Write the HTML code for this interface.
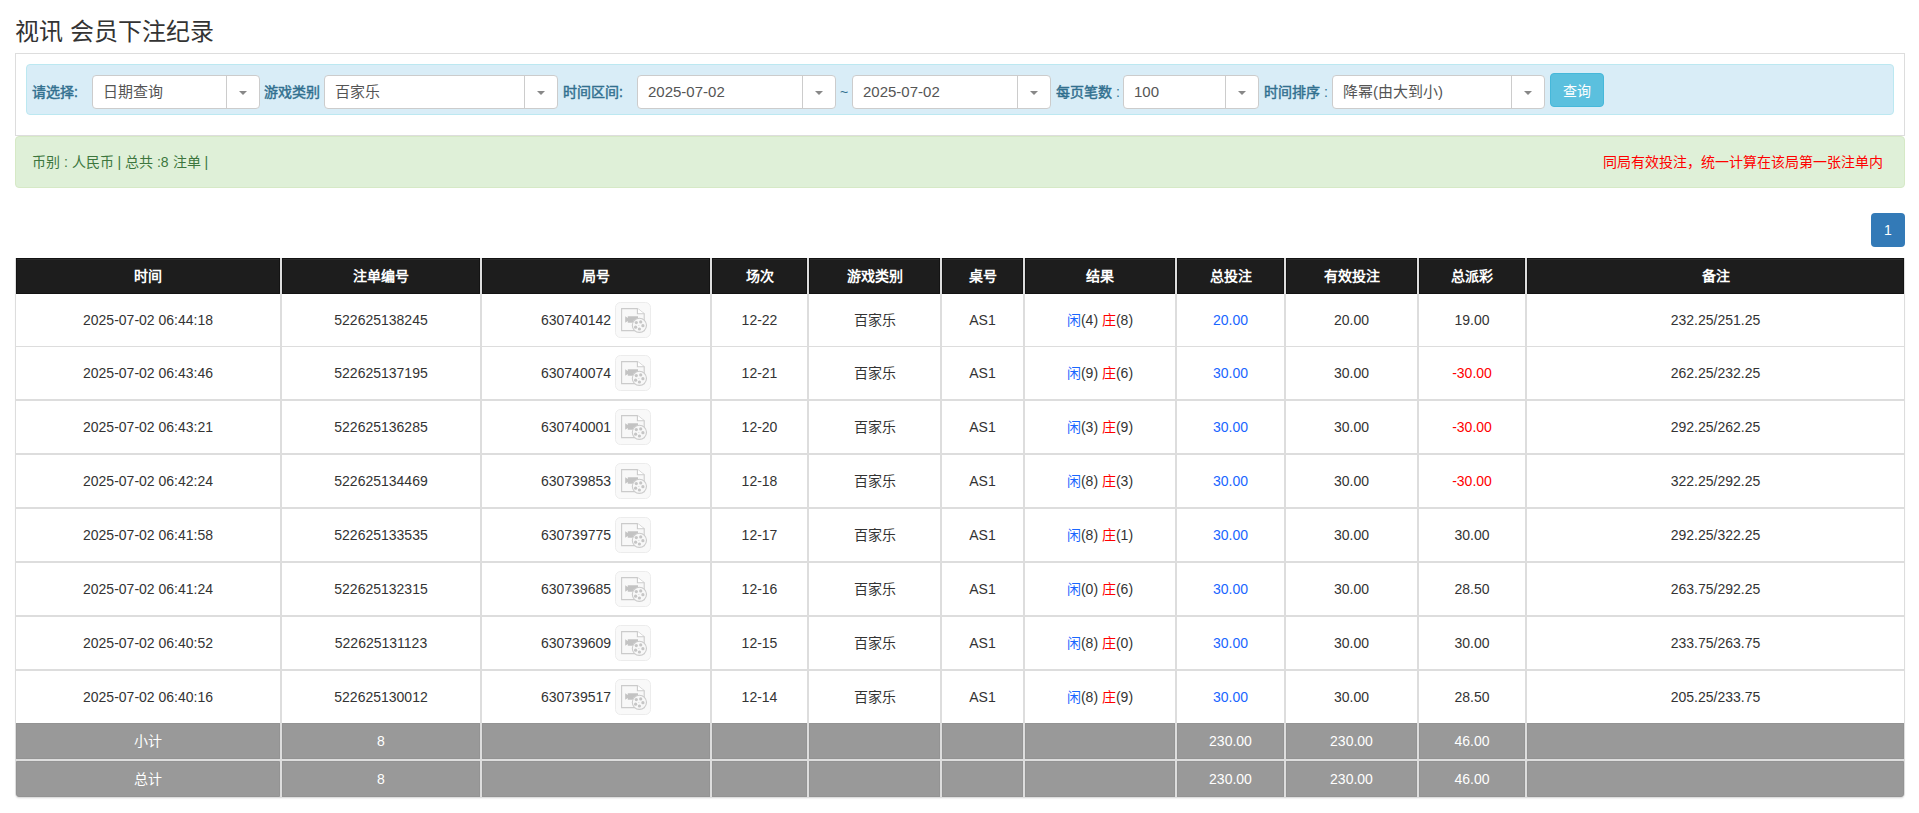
<!DOCTYPE html><html lang="zh-CN"><head><meta charset="utf-8"><style>
*{box-sizing:border-box;margin:0;padding:0}
html,body{width:1919px;height:813px;overflow:hidden;background:#fff}
body{font-family:"Liberation Sans",sans-serif;font-size:14px;color:#333;position:relative}
.a{position:absolute}
.t{position:absolute;white-space:nowrap;line-height:20px}
.title{font-size:24px;color:#333;line-height:30px}
.lbl{font-weight:500;color:#31708f;-webkit-text-stroke:0.45px #31708f}
.sel{position:absolute;top:75px;height:34px;background:#fff;border:1px solid #ccc;border-radius:4px}
.sel .dv{position:absolute;top:0;bottom:0;width:1px;background:#ccc}
.sel .ar{position:absolute;top:15px;width:0;height:0;border-left:4px solid transparent;border-right:4px solid transparent;border-top:4px solid #888}
.sel .tx{position:absolute;left:10px;top:6px;line-height:20px;font-size:15px;color:#555;white-space:nowrap}
.cell{position:absolute;background:#fff;display:flex;align-items:center;justify-content:center;white-space:nowrap;line-height:20px}
.hd{padding-top:0px;background:#1d1d1d;border:1px solid #131313;color:#fff;font-weight:bold;box-shadow:inset 0 1px 0 #2b2b2b}
.ft{background:#999;border:1px solid #939393;color:#fff}
.blr{border-bottom-left-radius:3px}.brr{border-bottom-right-radius:3px}.bl{color:#1a66ff}.rd{color:#f00}
</style></head><body>

<div class="t title" style="left:15px;top:17px">视讯 会员下注纪录</div>
<div class="a" style="left:15px;top:53px;width:1890px;height:83px;border:1px solid #ddd"></div>
<div class="a" style="left:26px;top:64px;width:1868px;height:51px;background:#d9edf7;border:1px solid #bce8f1;border-radius:4px"></div>
<div class="t lbl" style="left:32px;top:82px">请选择:</div>
<div class="sel" style="left:92px;width:168px"><div class="tx">日期查询</div><div class="dv" style="left:133px"></div><div class="ar" style="left:146px"></div></div>
<div class="t lbl" style="left:264px;top:82px">游戏类别</div>
<div class="sel" style="left:324px;width:234px"><div class="tx">百家乐</div><div class="dv" style="left:199px"></div><div class="ar" style="left:212px"></div></div>
<div class="t lbl" style="left:563px;top:82px">时间区间:</div>
<div class="sel" style="left:637px;width:199px"><div class="tx">2025-07-02</div><div class="dv" style="left:164px"></div><div class="ar" style="left:177px"></div></div>
<div class="t" style="left:840px;top:82px;color:#31708f">~</div>
<div class="sel" style="left:852px;width:199px"><div class="tx">2025-07-02</div><div class="dv" style="left:164px"></div><div class="ar" style="left:177px"></div></div>
<div class="t lbl" style="left:1056px;top:82px">每页笔数 <span style="font-weight:normal;-webkit-text-stroke:0">:</span></div>
<div class="sel" style="left:1123px;width:136px"><div class="tx">100</div><div class="dv" style="left:101px"></div><div class="ar" style="left:114px"></div></div>
<div class="t lbl" style="left:1264px;top:82px">时间排序 <span style="font-weight:normal;-webkit-text-stroke:0">:</span></div>
<div class="sel" style="left:1332px;width:213px"><div class="tx">降幂(由大到小)</div><div class="dv" style="left:178px"></div><div class="ar" style="left:191px"></div></div>
<div class="a" style="left:1550px;top:73px;width:54px;height:34px;background:#5bc0de;border:1px solid #46b8da;border-radius:4px;color:#fff;display:flex;align-items:center;justify-content:center;padding-top:2px;line-height:20px">查询</div>
<div class="a" style="left:15px;top:136px;width:1890px;height:52px;background:#dff0d8;border:1px solid #d6e9c6;border-radius:4px"></div>
<div class="t" style="left:32px;top:152px;color:#3c763d">币别 : 人民币 | 总共 :8 注单 |</div>
<div class="t" style="right:36px;top:152px;color:#f00">同局有效投注，统一计算在该局第一张注单内</div>
<div class="a" style="left:1871px;top:213px;width:34px;height:34px;background:#337ab7;border-radius:4px;color:#fff;display:flex;align-items:center;justify-content:center;line-height:20px">1</div>
<div class="a" style="left:15px;top:258px;width:1890px;height:539px;background:#ddd;border-radius:0 0 4px 4px;box-shadow:0 2px 2px -1px rgba(0,0,0,.18)"></div>
<div class="cell hd" style="left:16px;top:258px;width:264px;height:36px"><span>时间</span></div>
<div class="cell hd" style="left:282px;top:258px;width:198px;height:36px"><span>注单编号</span></div>
<div class="cell hd" style="left:482px;top:258px;width:228px;height:36px"><span>局号</span></div>
<div class="cell hd" style="left:712px;top:258px;width:95px;height:36px"><span>场次</span></div>
<div class="cell hd" style="left:809px;top:258px;width:131px;height:36px"><span>游戏类别</span></div>
<div class="cell hd" style="left:942px;top:258px;width:81px;height:36px"><span>桌号</span></div>
<div class="cell hd" style="left:1025px;top:258px;width:150px;height:36px"><span>结果</span></div>
<div class="cell hd" style="left:1177px;top:258px;width:107px;height:36px"><span>总投注</span></div>
<div class="cell hd" style="left:1286px;top:258px;width:131px;height:36px"><span>有效投注</span></div>
<div class="cell hd" style="left:1419px;top:258px;width:106px;height:36px"><span>总派彩</span></div>
<div class="cell hd" style="left:1527px;top:258px;width:377px;height:36px"><span>备注</span></div>
<div class="cell"  style="left:16px;top:294px;width:264px;height:52px"><span>2025-07-02 06:44:18</span></div>

<div class="cell"  style="left:282px;top:294px;width:198px;height:52px"><span>522625138245</span></div>

<div class="cell"  style="left:482px;top:294px;width:228px;height:52px"><span><span style="display:inline-flex;align-items:center">630740142<span style="display:block;width:36px;height:36px;margin-left:4px"><svg width="36" height="36" viewBox="0 0 36 36"><rect x="0.5" y="0.5" width="35" height="35" rx="5" fill="#f9f9f9" stroke="#ececec"/>
<path d="M6.6 6.6 H22.4 L29.2 11.8 V28.6 H6.6 Z" fill="#f8f8f8" stroke="#cbcbcb" stroke-width="1.1"/>
<path d="M22.4 6.6 V11.8 H29.2" fill="#fff" stroke="#cbcbcb" stroke-width="1.1"/>
<path d="M10.2 14.2 L12.8 15.9 V14.2 H23 V20.8 H12.8 V19 L10.2 20.8 Z" fill="#c3c3c3"/>
<circle cx="24.4" cy="23.3" r="7.1" fill="#f8f8f8" stroke="#cbcbcb" stroke-width="1.1"/>
<circle cx="21.3" cy="20.6" r="1.6" fill="#c6c6c6"/><circle cx="25.7" cy="19.9" r="1.6" fill="#c6c6c6"/>
<circle cx="27.9" cy="23.7" r="1.6" fill="#c6c6c6"/><circle cx="24.4" cy="27.0" r="1.6" fill="#c6c6c6"/>
<circle cx="20.6" cy="25.2" r="1.6" fill="#c6c6c6"/><circle cx="23.9" cy="23.5" r="0.5" fill="#d0d0d0"/></svg></span></span></span></div>

<div class="cell"  style="left:712px;top:294px;width:95px;height:52px"><span>12-22</span></div>

<div class="cell"  style="left:809px;top:294px;width:131px;height:52px"><span>百家乐</span></div>

<div class="cell"  style="left:942px;top:294px;width:81px;height:52px"><span>AS1</span></div>

<div class="cell"  style="left:1025px;top:294px;width:150px;height:52px"><span><span class="bl">闲</span>(4) <span class="rd">庄</span>(8)</span></div>

<div class="cell"  style="left:1177px;top:294px;width:107px;height:52px"><span><span class="bl">20.00</span></span></div>

<div class="cell"  style="left:1286px;top:294px;width:131px;height:52px"><span>20.00</span></div>

<div class="cell"  style="left:1419px;top:294px;width:106px;height:52px"><span>19.00</span></div>

<div class="cell"  style="left:1527px;top:294px;width:377px;height:52px"><span>232.25/251.25</span></div>

<div class="cell"  style="left:16px;top:347px;width:264px;height:52px"><span>2025-07-02 06:43:46</span></div>

<div class="cell"  style="left:282px;top:347px;width:198px;height:52px"><span>522625137195</span></div>

<div class="cell"  style="left:482px;top:347px;width:228px;height:52px"><span><span style="display:inline-flex;align-items:center">630740074<span style="display:block;width:36px;height:36px;margin-left:4px"><svg width="36" height="36" viewBox="0 0 36 36"><rect x="0.5" y="0.5" width="35" height="35" rx="5" fill="#f9f9f9" stroke="#ececec"/>
<path d="M6.6 6.6 H22.4 L29.2 11.8 V28.6 H6.6 Z" fill="#f8f8f8" stroke="#cbcbcb" stroke-width="1.1"/>
<path d="M22.4 6.6 V11.8 H29.2" fill="#fff" stroke="#cbcbcb" stroke-width="1.1"/>
<path d="M10.2 14.2 L12.8 15.9 V14.2 H23 V20.8 H12.8 V19 L10.2 20.8 Z" fill="#c3c3c3"/>
<circle cx="24.4" cy="23.3" r="7.1" fill="#f8f8f8" stroke="#cbcbcb" stroke-width="1.1"/>
<circle cx="21.3" cy="20.6" r="1.6" fill="#c6c6c6"/><circle cx="25.7" cy="19.9" r="1.6" fill="#c6c6c6"/>
<circle cx="27.9" cy="23.7" r="1.6" fill="#c6c6c6"/><circle cx="24.4" cy="27.0" r="1.6" fill="#c6c6c6"/>
<circle cx="20.6" cy="25.2" r="1.6" fill="#c6c6c6"/><circle cx="23.9" cy="23.5" r="0.5" fill="#d0d0d0"/></svg></span></span></span></div>

<div class="cell"  style="left:712px;top:347px;width:95px;height:52px"><span>12-21</span></div>

<div class="cell"  style="left:809px;top:347px;width:131px;height:52px"><span>百家乐</span></div>

<div class="cell"  style="left:942px;top:347px;width:81px;height:52px"><span>AS1</span></div>

<div class="cell"  style="left:1025px;top:347px;width:150px;height:52px"><span><span class="bl">闲</span>(9) <span class="rd">庄</span>(6)</span></div>

<div class="cell"  style="left:1177px;top:347px;width:107px;height:52px"><span><span class="bl">30.00</span></span></div>

<div class="cell"  style="left:1286px;top:347px;width:131px;height:52px"><span>30.00</span></div>

<div class="cell"  style="left:1419px;top:347px;width:106px;height:52px"><span><span class="rd">-30.00</span></span></div>

<div class="cell"  style="left:1527px;top:347px;width:377px;height:52px"><span>262.25/232.25</span></div>

<div class="cell"  style="left:16px;top:401px;width:264px;height:52px"><span>2025-07-02 06:43:21</span></div>

<div class="cell"  style="left:282px;top:401px;width:198px;height:52px"><span>522625136285</span></div>

<div class="cell"  style="left:482px;top:401px;width:228px;height:52px"><span><span style="display:inline-flex;align-items:center">630740001<span style="display:block;width:36px;height:36px;margin-left:4px"><svg width="36" height="36" viewBox="0 0 36 36"><rect x="0.5" y="0.5" width="35" height="35" rx="5" fill="#f9f9f9" stroke="#ececec"/>
<path d="M6.6 6.6 H22.4 L29.2 11.8 V28.6 H6.6 Z" fill="#f8f8f8" stroke="#cbcbcb" stroke-width="1.1"/>
<path d="M22.4 6.6 V11.8 H29.2" fill="#fff" stroke="#cbcbcb" stroke-width="1.1"/>
<path d="M10.2 14.2 L12.8 15.9 V14.2 H23 V20.8 H12.8 V19 L10.2 20.8 Z" fill="#c3c3c3"/>
<circle cx="24.4" cy="23.3" r="7.1" fill="#f8f8f8" stroke="#cbcbcb" stroke-width="1.1"/>
<circle cx="21.3" cy="20.6" r="1.6" fill="#c6c6c6"/><circle cx="25.7" cy="19.9" r="1.6" fill="#c6c6c6"/>
<circle cx="27.9" cy="23.7" r="1.6" fill="#c6c6c6"/><circle cx="24.4" cy="27.0" r="1.6" fill="#c6c6c6"/>
<circle cx="20.6" cy="25.2" r="1.6" fill="#c6c6c6"/><circle cx="23.9" cy="23.5" r="0.5" fill="#d0d0d0"/></svg></span></span></span></div>

<div class="cell"  style="left:712px;top:401px;width:95px;height:52px"><span>12-20</span></div>

<div class="cell"  style="left:809px;top:401px;width:131px;height:52px"><span>百家乐</span></div>

<div class="cell"  style="left:942px;top:401px;width:81px;height:52px"><span>AS1</span></div>

<div class="cell"  style="left:1025px;top:401px;width:150px;height:52px"><span><span class="bl">闲</span>(3) <span class="rd">庄</span>(9)</span></div>

<div class="cell"  style="left:1177px;top:401px;width:107px;height:52px"><span><span class="bl">30.00</span></span></div>

<div class="cell"  style="left:1286px;top:401px;width:131px;height:52px"><span>30.00</span></div>

<div class="cell"  style="left:1419px;top:401px;width:106px;height:52px"><span><span class="rd">-30.00</span></span></div>

<div class="cell"  style="left:1527px;top:401px;width:377px;height:52px"><span>292.25/262.25</span></div>

<div class="cell"  style="left:16px;top:455px;width:264px;height:52px"><span>2025-07-02 06:42:24</span></div>

<div class="cell"  style="left:282px;top:455px;width:198px;height:52px"><span>522625134469</span></div>

<div class="cell"  style="left:482px;top:455px;width:228px;height:52px"><span><span style="display:inline-flex;align-items:center">630739853<span style="display:block;width:36px;height:36px;margin-left:4px"><svg width="36" height="36" viewBox="0 0 36 36"><rect x="0.5" y="0.5" width="35" height="35" rx="5" fill="#f9f9f9" stroke="#ececec"/>
<path d="M6.6 6.6 H22.4 L29.2 11.8 V28.6 H6.6 Z" fill="#f8f8f8" stroke="#cbcbcb" stroke-width="1.1"/>
<path d="M22.4 6.6 V11.8 H29.2" fill="#fff" stroke="#cbcbcb" stroke-width="1.1"/>
<path d="M10.2 14.2 L12.8 15.9 V14.2 H23 V20.8 H12.8 V19 L10.2 20.8 Z" fill="#c3c3c3"/>
<circle cx="24.4" cy="23.3" r="7.1" fill="#f8f8f8" stroke="#cbcbcb" stroke-width="1.1"/>
<circle cx="21.3" cy="20.6" r="1.6" fill="#c6c6c6"/><circle cx="25.7" cy="19.9" r="1.6" fill="#c6c6c6"/>
<circle cx="27.9" cy="23.7" r="1.6" fill="#c6c6c6"/><circle cx="24.4" cy="27.0" r="1.6" fill="#c6c6c6"/>
<circle cx="20.6" cy="25.2" r="1.6" fill="#c6c6c6"/><circle cx="23.9" cy="23.5" r="0.5" fill="#d0d0d0"/></svg></span></span></span></div>

<div class="cell"  style="left:712px;top:455px;width:95px;height:52px"><span>12-18</span></div>

<div class="cell"  style="left:809px;top:455px;width:131px;height:52px"><span>百家乐</span></div>

<div class="cell"  style="left:942px;top:455px;width:81px;height:52px"><span>AS1</span></div>

<div class="cell"  style="left:1025px;top:455px;width:150px;height:52px"><span><span class="bl">闲</span>(8) <span class="rd">庄</span>(3)</span></div>

<div class="cell"  style="left:1177px;top:455px;width:107px;height:52px"><span><span class="bl">30.00</span></span></div>

<div class="cell"  style="left:1286px;top:455px;width:131px;height:52px"><span>30.00</span></div>

<div class="cell"  style="left:1419px;top:455px;width:106px;height:52px"><span><span class="rd">-30.00</span></span></div>

<div class="cell"  style="left:1527px;top:455px;width:377px;height:52px"><span>322.25/292.25</span></div>

<div class="cell"  style="left:16px;top:509px;width:264px;height:52px"><span>2025-07-02 06:41:58</span></div>

<div class="cell"  style="left:282px;top:509px;width:198px;height:52px"><span>522625133535</span></div>

<div class="cell"  style="left:482px;top:509px;width:228px;height:52px"><span><span style="display:inline-flex;align-items:center">630739775<span style="display:block;width:36px;height:36px;margin-left:4px"><svg width="36" height="36" viewBox="0 0 36 36"><rect x="0.5" y="0.5" width="35" height="35" rx="5" fill="#f9f9f9" stroke="#ececec"/>
<path d="M6.6 6.6 H22.4 L29.2 11.8 V28.6 H6.6 Z" fill="#f8f8f8" stroke="#cbcbcb" stroke-width="1.1"/>
<path d="M22.4 6.6 V11.8 H29.2" fill="#fff" stroke="#cbcbcb" stroke-width="1.1"/>
<path d="M10.2 14.2 L12.8 15.9 V14.2 H23 V20.8 H12.8 V19 L10.2 20.8 Z" fill="#c3c3c3"/>
<circle cx="24.4" cy="23.3" r="7.1" fill="#f8f8f8" stroke="#cbcbcb" stroke-width="1.1"/>
<circle cx="21.3" cy="20.6" r="1.6" fill="#c6c6c6"/><circle cx="25.7" cy="19.9" r="1.6" fill="#c6c6c6"/>
<circle cx="27.9" cy="23.7" r="1.6" fill="#c6c6c6"/><circle cx="24.4" cy="27.0" r="1.6" fill="#c6c6c6"/>
<circle cx="20.6" cy="25.2" r="1.6" fill="#c6c6c6"/><circle cx="23.9" cy="23.5" r="0.5" fill="#d0d0d0"/></svg></span></span></span></div>

<div class="cell"  style="left:712px;top:509px;width:95px;height:52px"><span>12-17</span></div>

<div class="cell"  style="left:809px;top:509px;width:131px;height:52px"><span>百家乐</span></div>

<div class="cell"  style="left:942px;top:509px;width:81px;height:52px"><span>AS1</span></div>

<div class="cell"  style="left:1025px;top:509px;width:150px;height:52px"><span><span class="bl">闲</span>(8) <span class="rd">庄</span>(1)</span></div>

<div class="cell"  style="left:1177px;top:509px;width:107px;height:52px"><span><span class="bl">30.00</span></span></div>

<div class="cell"  style="left:1286px;top:509px;width:131px;height:52px"><span>30.00</span></div>

<div class="cell"  style="left:1419px;top:509px;width:106px;height:52px"><span>30.00</span></div>

<div class="cell"  style="left:1527px;top:509px;width:377px;height:52px"><span>292.25/322.25</span></div>

<div class="cell"  style="left:16px;top:563px;width:264px;height:52px"><span>2025-07-02 06:41:24</span></div>

<div class="cell"  style="left:282px;top:563px;width:198px;height:52px"><span>522625132315</span></div>

<div class="cell"  style="left:482px;top:563px;width:228px;height:52px"><span><span style="display:inline-flex;align-items:center">630739685<span style="display:block;width:36px;height:36px;margin-left:4px"><svg width="36" height="36" viewBox="0 0 36 36"><rect x="0.5" y="0.5" width="35" height="35" rx="5" fill="#f9f9f9" stroke="#ececec"/>
<path d="M6.6 6.6 H22.4 L29.2 11.8 V28.6 H6.6 Z" fill="#f8f8f8" stroke="#cbcbcb" stroke-width="1.1"/>
<path d="M22.4 6.6 V11.8 H29.2" fill="#fff" stroke="#cbcbcb" stroke-width="1.1"/>
<path d="M10.2 14.2 L12.8 15.9 V14.2 H23 V20.8 H12.8 V19 L10.2 20.8 Z" fill="#c3c3c3"/>
<circle cx="24.4" cy="23.3" r="7.1" fill="#f8f8f8" stroke="#cbcbcb" stroke-width="1.1"/>
<circle cx="21.3" cy="20.6" r="1.6" fill="#c6c6c6"/><circle cx="25.7" cy="19.9" r="1.6" fill="#c6c6c6"/>
<circle cx="27.9" cy="23.7" r="1.6" fill="#c6c6c6"/><circle cx="24.4" cy="27.0" r="1.6" fill="#c6c6c6"/>
<circle cx="20.6" cy="25.2" r="1.6" fill="#c6c6c6"/><circle cx="23.9" cy="23.5" r="0.5" fill="#d0d0d0"/></svg></span></span></span></div>

<div class="cell"  style="left:712px;top:563px;width:95px;height:52px"><span>12-16</span></div>

<div class="cell"  style="left:809px;top:563px;width:131px;height:52px"><span>百家乐</span></div>

<div class="cell"  style="left:942px;top:563px;width:81px;height:52px"><span>AS1</span></div>

<div class="cell"  style="left:1025px;top:563px;width:150px;height:52px"><span><span class="bl">闲</span>(0) <span class="rd">庄</span>(6)</span></div>

<div class="cell"  style="left:1177px;top:563px;width:107px;height:52px"><span><span class="bl">30.00</span></span></div>

<div class="cell"  style="left:1286px;top:563px;width:131px;height:52px"><span>30.00</span></div>

<div class="cell"  style="left:1419px;top:563px;width:106px;height:52px"><span>28.50</span></div>

<div class="cell"  style="left:1527px;top:563px;width:377px;height:52px"><span>263.75/292.25</span></div>

<div class="cell"  style="left:16px;top:617px;width:264px;height:52px"><span>2025-07-02 06:40:52</span></div>

<div class="cell"  style="left:282px;top:617px;width:198px;height:52px"><span>522625131123</span></div>

<div class="cell"  style="left:482px;top:617px;width:228px;height:52px"><span><span style="display:inline-flex;align-items:center">630739609<span style="display:block;width:36px;height:36px;margin-left:4px"><svg width="36" height="36" viewBox="0 0 36 36"><rect x="0.5" y="0.5" width="35" height="35" rx="5" fill="#f9f9f9" stroke="#ececec"/>
<path d="M6.6 6.6 H22.4 L29.2 11.8 V28.6 H6.6 Z" fill="#f8f8f8" stroke="#cbcbcb" stroke-width="1.1"/>
<path d="M22.4 6.6 V11.8 H29.2" fill="#fff" stroke="#cbcbcb" stroke-width="1.1"/>
<path d="M10.2 14.2 L12.8 15.9 V14.2 H23 V20.8 H12.8 V19 L10.2 20.8 Z" fill="#c3c3c3"/>
<circle cx="24.4" cy="23.3" r="7.1" fill="#f8f8f8" stroke="#cbcbcb" stroke-width="1.1"/>
<circle cx="21.3" cy="20.6" r="1.6" fill="#c6c6c6"/><circle cx="25.7" cy="19.9" r="1.6" fill="#c6c6c6"/>
<circle cx="27.9" cy="23.7" r="1.6" fill="#c6c6c6"/><circle cx="24.4" cy="27.0" r="1.6" fill="#c6c6c6"/>
<circle cx="20.6" cy="25.2" r="1.6" fill="#c6c6c6"/><circle cx="23.9" cy="23.5" r="0.5" fill="#d0d0d0"/></svg></span></span></span></div>

<div class="cell"  style="left:712px;top:617px;width:95px;height:52px"><span>12-15</span></div>

<div class="cell"  style="left:809px;top:617px;width:131px;height:52px"><span>百家乐</span></div>

<div class="cell"  style="left:942px;top:617px;width:81px;height:52px"><span>AS1</span></div>

<div class="cell"  style="left:1025px;top:617px;width:150px;height:52px"><span><span class="bl">闲</span>(8) <span class="rd">庄</span>(0)</span></div>

<div class="cell"  style="left:1177px;top:617px;width:107px;height:52px"><span><span class="bl">30.00</span></span></div>

<div class="cell"  style="left:1286px;top:617px;width:131px;height:52px"><span>30.00</span></div>

<div class="cell"  style="left:1419px;top:617px;width:106px;height:52px"><span>30.00</span></div>

<div class="cell"  style="left:1527px;top:617px;width:377px;height:52px"><span>233.75/263.75</span></div>

<div class="cell"  style="left:16px;top:671px;width:264px;height:52px"><span>2025-07-02 06:40:16</span></div>

<div class="cell"  style="left:282px;top:671px;width:198px;height:52px"><span>522625130012</span></div>

<div class="cell"  style="left:482px;top:671px;width:228px;height:52px"><span><span style="display:inline-flex;align-items:center">630739517<span style="display:block;width:36px;height:36px;margin-left:4px"><svg width="36" height="36" viewBox="0 0 36 36"><rect x="0.5" y="0.5" width="35" height="35" rx="5" fill="#f9f9f9" stroke="#ececec"/>
<path d="M6.6 6.6 H22.4 L29.2 11.8 V28.6 H6.6 Z" fill="#f8f8f8" stroke="#cbcbcb" stroke-width="1.1"/>
<path d="M22.4 6.6 V11.8 H29.2" fill="#fff" stroke="#cbcbcb" stroke-width="1.1"/>
<path d="M10.2 14.2 L12.8 15.9 V14.2 H23 V20.8 H12.8 V19 L10.2 20.8 Z" fill="#c3c3c3"/>
<circle cx="24.4" cy="23.3" r="7.1" fill="#f8f8f8" stroke="#cbcbcb" stroke-width="1.1"/>
<circle cx="21.3" cy="20.6" r="1.6" fill="#c6c6c6"/><circle cx="25.7" cy="19.9" r="1.6" fill="#c6c6c6"/>
<circle cx="27.9" cy="23.7" r="1.6" fill="#c6c6c6"/><circle cx="24.4" cy="27.0" r="1.6" fill="#c6c6c6"/>
<circle cx="20.6" cy="25.2" r="1.6" fill="#c6c6c6"/><circle cx="23.9" cy="23.5" r="0.5" fill="#d0d0d0"/></svg></span></span></span></div>

<div class="cell"  style="left:712px;top:671px;width:95px;height:52px"><span>12-14</span></div>

<div class="cell"  style="left:809px;top:671px;width:131px;height:52px"><span>百家乐</span></div>

<div class="cell"  style="left:942px;top:671px;width:81px;height:52px"><span>AS1</span></div>

<div class="cell"  style="left:1025px;top:671px;width:150px;height:52px"><span><span class="bl">闲</span>(8) <span class="rd">庄</span>(9)</span></div>

<div class="cell"  style="left:1177px;top:671px;width:107px;height:52px"><span><span class="bl">30.00</span></span></div>

<div class="cell"  style="left:1286px;top:671px;width:131px;height:52px"><span>30.00</span></div>

<div class="cell"  style="left:1419px;top:671px;width:106px;height:52px"><span>28.50</span></div>

<div class="cell"  style="left:1527px;top:671px;width:377px;height:52px"><span>205.25/233.75</span></div>

<div class="cell ft" style="left:16px;top:723px;width:264px;height:36px"><span>小计</span></div>
<div class="cell ft" style="left:282px;top:723px;width:198px;height:36px"><span>8</span></div>
<div class="cell ft" style="left:482px;top:723px;width:228px;height:36px"><span></span></div>
<div class="cell ft" style="left:712px;top:723px;width:95px;height:36px"><span></span></div>
<div class="cell ft" style="left:809px;top:723px;width:131px;height:36px"><span></span></div>
<div class="cell ft" style="left:942px;top:723px;width:81px;height:36px"><span></span></div>
<div class="cell ft" style="left:1025px;top:723px;width:150px;height:36px"><span></span></div>
<div class="cell ft" style="left:1177px;top:723px;width:107px;height:36px"><span>230.00</span></div>
<div class="cell ft" style="left:1286px;top:723px;width:131px;height:36px"><span>230.00</span></div>
<div class="cell ft" style="left:1419px;top:723px;width:106px;height:36px"><span>46.00</span></div>
<div class="cell ft" style="left:1527px;top:723px;width:377px;height:36px"><span></span></div>
<div class="cell ft blr" style="left:16px;top:761px;width:264px;height:36px"><span>总计</span></div>
<div class="cell ft" style="left:282px;top:761px;width:198px;height:36px"><span>8</span></div>
<div class="cell ft" style="left:482px;top:761px;width:228px;height:36px"><span></span></div>
<div class="cell ft" style="left:712px;top:761px;width:95px;height:36px"><span></span></div>
<div class="cell ft" style="left:809px;top:761px;width:131px;height:36px"><span></span></div>
<div class="cell ft" style="left:942px;top:761px;width:81px;height:36px"><span></span></div>
<div class="cell ft" style="left:1025px;top:761px;width:150px;height:36px"><span></span></div>
<div class="cell ft" style="left:1177px;top:761px;width:107px;height:36px"><span>230.00</span></div>
<div class="cell ft" style="left:1286px;top:761px;width:131px;height:36px"><span>230.00</span></div>
<div class="cell ft" style="left:1419px;top:761px;width:106px;height:36px"><span>46.00</span></div>
<div class="cell ft brr" style="left:1527px;top:761px;width:377px;height:36px"><span></span></div>
</body></html>
